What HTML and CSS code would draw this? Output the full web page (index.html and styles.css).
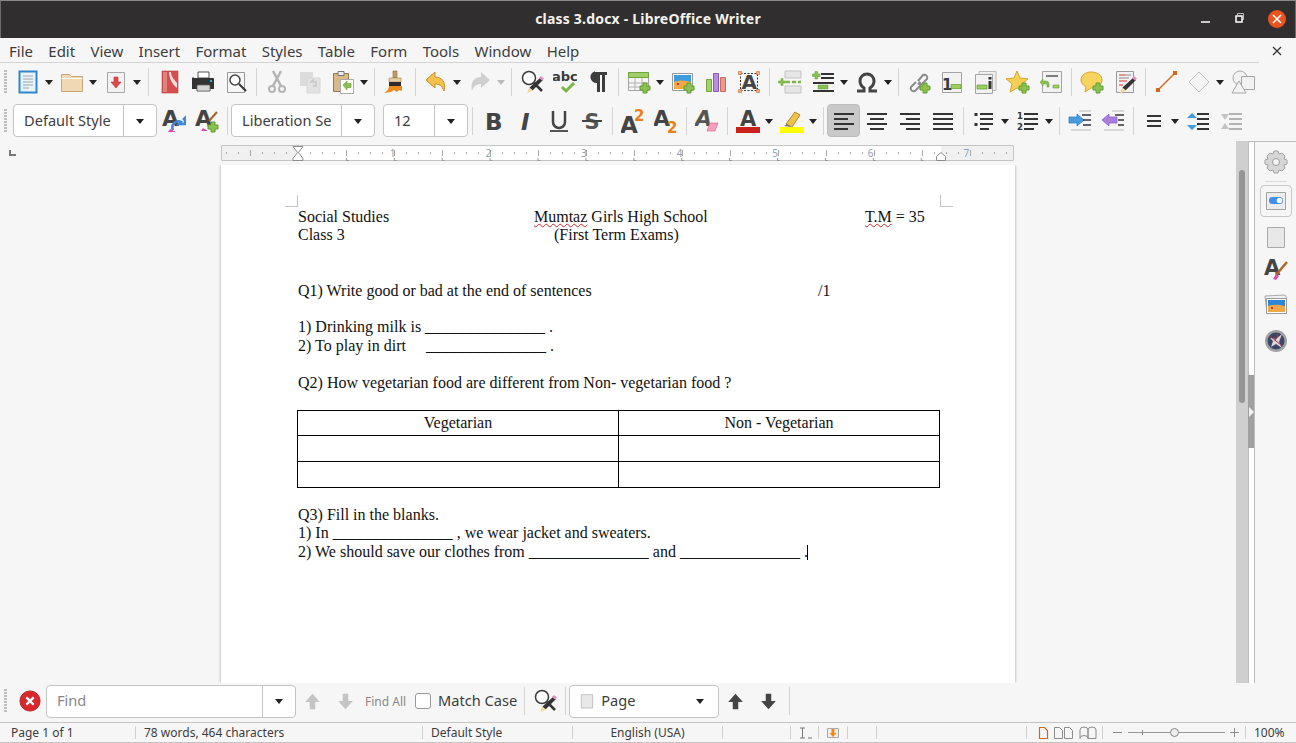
FILE: index.html
```html
<!DOCTYPE html>
<html lang="en">
<head>
    <meta charset="UTF-8">
    <title>class 3.docx - LibreOffice Writer</title>
    <link rel="stylesheet" href="styles.css">
</head>
<body>
<svg class="defs" width="0" height="0">
    <defs>
        <path id="plus" d="M16 13h4v3h3v4h-3v3h-4v-3h-3v-4h3z" fill="#8cc152" stroke="#5f9e2f"/>
        <g id="lens"><circle cx="9" cy="8" r="6.500" fill="#fff" stroke="#3a3a3a" stroke-width="1.500"/><path d="M14 13l8 8" stroke="#333" stroke-width="2.500"/></g>
        <g id="pencil"><path d="M8 22l2-5 10-9 3 2-10 10z" fill="#333"/><path d="M7 23.500l2.500-6 3.500 3z" fill="#f3dc9b"/><path d="M19 8l2-2 3 2.500-2 2z" fill="#e68fc0"/></g>

        <symbol id="i-new" viewBox="0 0 24 24"><path d="M3.500 1.500h17v21h-17z" fill="#eaf3fb" stroke="#2f86c9" stroke-width="2"/><path d="M7 6h10M7 9h10M7 12h10M7 15h10M7 18h6" stroke="#9aa4ad"/></symbol>
        <symbol id="i-open" viewBox="0 0 24 24"><path d="M1.500 4.500h8l2 2h11v15h-21z" fill="#f0d9b2" stroke="#c7a77a"/><path d="M1.500 8.500h21" stroke="#fff"/></symbol>
        <symbol id="i-save" viewBox="0 0 24 24"><path d="M3.500 2.500h17v20h-17z" fill="#f2f2f2" stroke="#a8a8a8"/><path d="M10 7h4v5h3l-5 6-5-6h3z" fill="#e0484a" stroke="#b53335" stroke-width=".6"/></symbol>
        <symbol id="i-pdf" viewBox="0 0 24 24"><path d="M4 1h16v22h-16z" fill="#d3504f" stroke="#b8403f" stroke-width=".6"/><path d="M5 2h4v20h-4z" fill="#e0807f"/><path d="M11 2h8v16c-5-4-8-10-8-16z" fill="#f6dddc"/><path d="M13 2h6v11c-3-3-6-7-6-11z" fill="#d3504f"/></symbol>
        <symbol id="i-print" viewBox="0 0 24 24"><path d="M7 2h11v6h-11z" fill="#fff" stroke="#555"/><path d="M3 8h19a1 1 0 0 1 1 1v10h-22v-10a1 1 0 0 1 2-1z" fill="#333"/><path d="M6 15h13v6h-13z" fill="#fff" stroke="#555"/><path d="M7 17h11M7 19h11" stroke="#aaa"/><path d="M19 10h2v2h-2z" fill="#29b6e8"/></symbol>
        <symbol id="i-preview" viewBox="0 0 24 24"><path d="M3.500 2.500h17v20h-17z" fill="#f6f6f6" stroke="#999"/><circle cx="11" cy="10" r="5" fill="#fff" stroke="#444" stroke-width="1.500"/><path d="M15 14l7 7" stroke="#333" stroke-width="2"/></symbol>
        <symbol id="i-cut" viewBox="0 0 24 24"><g fill="none" stroke="#b4b4b4" stroke-width="2"><circle cx="7" cy="19" r="3"/><circle cx="17" cy="19" r="3"/><path d="M8 16l8-15M16 16l-8-15" stroke-width="2.500"/></g></symbol>
        <symbol id="i-copy" viewBox="0 0 24 24"><path d="M2 2h13v14h-13z" fill="#dcdcdc"/><path d="M9 8h13v15h-13z" fill="#e2e2e2" stroke="#d6d6d6"/><path d="M12 13l3-3v2h3v4h-3" fill="none" stroke="#c8c8c8" stroke-width="1.500"/></symbol>
        <symbol id="i-paste" viewBox="0 0 24 24"><path d="M2.500 3.500h15v18h-15z" fill="#d8b98b" stroke="#94784f"/><path d="M7 1.500h6v4h-6z" fill="#eee" stroke="#777"/><path d="M9.500 9.500h13v14h-13z" fill="#fff" stroke="#aaa"/><path d="M12 15l4-4v2.500h4v4h-4v2.500z" fill="#8cc152" stroke="#5f9e2f" stroke-width=".6"/></symbol>
        <symbol id="i-brush" viewBox="0 0 24 24"><path d="M10 1h4v7h-4z" fill="#c59a63" stroke="#8a6a3c" stroke-width=".6"/><path d="M6 8h12v4h-12z" fill="#e6cfa5" stroke="#a5854f" stroke-width=".6"/><path d="M6 12h12v4h-12z" fill="#2d2d2d"/><path d="M6 16h13v5l-3-1-2 2-3-2-3 2-7 1c3-2 5-4 5-7z" fill="#ee8a1c"/></symbol>
        <symbol id="i-undo" viewBox="0 0 24 24"><path d="M2 10l9-8v5c7 0 11 5 9 14-2-5-4-7-9-7v4z" fill="#f2c04d" stroke="#c89222"/></symbol>
        <symbol id="i-redo" viewBox="0 0 24 24"><path d="M22 10l-9-8v5c-7 0-11 5-9 14 2-5 4-7 9-7v4z" fill="#cfcfcf"/></symbol>
        <symbol id="i-find" viewBox="0 0 24 24"><use href="#lens"/><use href="#pencil"/></symbol>
        <symbol id="i-abc" viewBox="0 0 24 24"><text class="ig" x="-1" y="11" font-size="13" fill="#3a3a3a">abc</text><path d="M9 17l4 4 8-8" fill="none" stroke="#7ab648" stroke-width="3"/></symbol>
        <symbol id="i-pil" viewBox="0 0 24 24"><path d="M9 2h12v3h-2v17h-3v-17h-2v17h-3v-9a6 6 0 0 1-2-11.800z" fill="#3d3d3d"/></symbol>
        <symbol id="i-table" viewBox="0 0 24 24"><path d="M1.500 2.500h20v18h-20z" fill="#f5f5f5" stroke="#a4a4a4"/><path d="M1.500 2.500h20v5h-20z" fill="#9fcf6a" stroke="#6fa53a"/><path d="M8 8v12M15 8v12M2 13h19M2 17h19" stroke="#b0b0b0"/><use href="#plus"/></symbol>
        <symbol id="i-image" viewBox="0 0 24 24"><path d="M1.500 3.500h20v17h-20z" fill="#fff" stroke="#999"/><path d="M3 5h17v8h-17z" fill="#3d9be0"/><path d="M3 12c5-2 11-2 17 0v7h-17z" fill="#f0a94a"/><path d="M6 13h2v2h-2z" fill="#d9342b"/><use href="#plus"/></symbol>
        <symbol id="i-chart" viewBox="0 0 24 24"><path d="M2.500 9.500h5v12h-5z" fill="#a5d16b" stroke="#75a53a"/><path d="M9.500 3.500h5v18h-5z" fill="#b88ce0" stroke="#8a5cb5"/><path d="M16.500 7.500h5v14h-5z" fill="#ee9b8a" stroke="#c96b58"/></symbol>
        <symbol id="i-textbox" viewBox="0 0 24 24"><path d="M3.500 3.500h17v17h-17z" fill="none" stroke="#333" stroke-dasharray="2 1.500"/><g fill="#f5b183" stroke="#d9733a" stroke-width=".7"><path d="M1.500 1.500h3v3h-3zM19.500 1.500h3v3h-3zM1.500 19.500h3v3h-3zM19.500 19.500h3v3h-3z"/></g><text class="ig" x="4.500" y="19" font-size="20" fill="#444">A</text></symbol>
        <symbol id="i-break" viewBox="0 0 24 24"><path d="M7 1h16v7h-16zM7 16h16v7h-16z" fill="#e6e6e6" stroke="#c4c4c4"/><path d="M8 12h15" stroke="#7ab648" stroke-width="2.500" stroke-dasharray="4 2"/><path d="M3 8.500h2v2.500h2.500v2h-2.500v2.500h-2v-2.500h-2.500v-2h2.500z" fill="#8cc152" stroke="#5f9e2f" stroke-width=".5"/></symbol>
        <symbol id="i-field" viewBox="0 0 24 24"><path d="M4 1.500h2.500v2.500h2.500v2.500h-2.500v2.500h-2.500v-2.500h-2.500v-2.500h2.500z" fill="#8cc152" stroke="#5f9e2f" stroke-width=".5"/><path d="M10 4h13M10 8h13M2 13h21M2 21h21" stroke="#333" stroke-width="2"/><path d="M7 15h10v4h-10z" fill="#8cc152" stroke="#5f9e2f" stroke-width=".5"/></symbol>
        <symbol id="i-omega" viewBox="0 0 24 24"><path d="M2 21h7v-3c-3-2-4-4-4-7 0-4 3-7 7-7s7 3 7 7c0 3-1 5-4 7v3h7" fill="none" stroke="#444" stroke-width="3"/></symbol>
        <symbol id="i-link" viewBox="0 0 24 24"><g fill="none" stroke="#8a8a8a" stroke-width="2"><path d="M9 12l-5 5a3 3 0 0 0 4 4l5-5a3 3 0 0 0-1-4"/><path d="M11 11l5-6a3 3 0 0 1 4 4l-5 5a3 3 0 0 1-4-1"/></g><use href="#plus"/></symbol>
        <symbol id="i-foot" viewBox="0 0 24 24"><path d="M2.500 2.500h19v20h-19z" fill="#f2f2f2" stroke="#a4a4a4"/><text class="ig" x="2" y="20" font-size="15" fill="#3a3a3a">1</text><path d="M11 14.500h10v4h-10z" fill="#9bd05f" stroke="#5f9e2f" stroke-width=".7"/></symbol>
        <symbol id="i-end" viewBox="0 0 24 24"><path d="M6 1.500h17v19h-17z" fill="#eee" stroke="#bbb"/><path d="M2.500 4.500h17v19h-17z" fill="#f2f2f2" stroke="#a4a4a4"/><path d="M4 15h10v4h-10z" fill="#9bd05f" stroke="#5f9e2f" stroke-width=".7"/><path d="M15.500 11h3v8h-3zM15.500 7h3v2.500h-3z" fill="#333"/></symbol>
        <symbol id="i-star" viewBox="0 0 24 24"><path d="M11 1l3 7 8 .8-6 5.200 2 8-7-4-7 4 2-8-6-5.200 8-.8z" fill="#f6cf55" stroke="#d9a531"/><use href="#plus"/></symbol>
        <symbol id="i-xref" viewBox="0 0 24 24"><path d="M3.500 1.500h19v21h-19z" fill="#f2f2f2" stroke="#a4a4a4"/><path d="M7 6h12" stroke="#555" stroke-width="1.500"/><path d="M14 15h6v3h-6z" fill="#9bd05f" stroke="#5f9e2f" stroke-width=".6"/><path d="M1 12l3-3v2h3a3 3 0 0 1 3 3v3l-2 0v-3h-4v2z" fill="#8cc152" stroke="#5f9e2f" stroke-width=".5"/></symbol>
        <symbol id="i-comment" viewBox="0 0 24 24"><path d="M11 2c6 0 11 3 11 8s-5 8-11 8l-6 4 1-5c-3-2-5-4-5-7 0-5 5-8 10-8z" fill="#f7d360" stroke="#d7a62c"/><use href="#plus"/></symbol>
        <symbol id="i-track" viewBox="0 0 24 24"><path d="M3.500 1.500h17v21h-17z" fill="#f2f2f2" stroke="#999"/><path d="M6 5h6M6 11h8M6 15h4" stroke="#d9342b"/><path d="M6 8h10M12 5h6" stroke="#888"/><use href="#pencil"/></symbol>
        <symbol id="i-line" viewBox="0 0 24 24"><path d="M4 20l17-17" stroke="#d4651d" stroke-width="1.500"/><path d="M2 18h4v4h-4zM19 1h4v4h-4z" fill="#d4651d"/></symbol>
        <symbol id="i-diamond" viewBox="0 0 24 24"><path d="M12 2l10 10-10 10-10-10z" fill="#f4f4f4" stroke="#c0c0c0"/></symbol>
        <symbol id="i-shapes" viewBox="0 0 24 24"><circle cx="9" cy="8" r="7" fill="#f2f2f2" stroke="#a6a6a6"/><path d="M10.500 6.500h13v13h-13z" fill="#f2f2f2" stroke="#a6a6a6"/><path d="M8 11l7 12h-14z" fill="#f2f2f2" stroke="#a6a6a6"/></symbol>

        <symbol id="i-upd" viewBox="0 0 24 24"><text class="ig" x="0" y="17" font-size="22" fill="#444">A</text><path d="M11 21a6 6 0 0 1 8-8l-2 2h6v-6l-2 2" fill="none" stroke="#3d87d8" stroke-width="2.500"/><path d="M8 20l6 3h-8z" fill="#d44fb0"/></symbol>
        <symbol id="i-newst" viewBox="0 0 24 24"><text class="ig" x="0" y="17" font-size="22" fill="#444">A</text><path d="M14 12l8-9" stroke="#a9622a" stroke-width="2"/><path d="M8 19l5 3h-7z" fill="#d44fb0"/><use href="#plus"/></symbol>
        <symbol id="i-b" viewBox="0 0 24 24"><text class="ig" x="4" y="21" font-size="23" fill="#444">B</text></symbol>
        <symbol id="i-i" viewBox="0 0 24 24"><text class="ig ig-it" x="7" y="21" font-size="23" fill="#444">I</text></symbol>
        <symbol id="i-u" viewBox="0 0 24 24"><path d="M6 2v11a6 6 0 0 0 12 0v-11" fill="none" stroke="#444" stroke-width="2.500"/><path d="M3 22h18" stroke="#555" stroke-width="2"/></symbol>
        <symbol id="i-s" viewBox="0 0 24 24"><text class="ig" x="4.500" y="20" font-size="21" fill="#555">S</text><path d="M2 12h20" stroke="#444" stroke-width="2"/></symbol>
        <symbol id="i-sup" viewBox="0 0 24 24"><text class="ig" x="-1" y="24" font-size="23" fill="#444">A</text><text class="ig" x="13" y="12" font-size="15" fill="#e8801a">2</text></symbol>
        <symbol id="i-sub" viewBox="0 0 24 24"><text class="ig" x="-1" y="17" font-size="22" fill="#444">A</text><text class="ig" x="13" y="24" font-size="15" fill="#e8801a">2</text></symbol>
        <symbol id="i-clear" viewBox="0 0 24 24"><text class="ig ig-it" x="0" y="17" font-size="22" fill="#555">A</text><path d="M12 22l3-8h8l-3 8z" fill="#f2a0bd" stroke="#d76a93" stroke-width=".7"/></symbol>
        <symbol id="i-color" viewBox="0 0 24 24"><text class="ig" x="4" y="17" font-size="21" fill="#444">A</text><path d="M0 18h24v6h-24z" fill="#c9211e"/></symbol>
        <symbol id="i-mark" viewBox="0 0 24 24"><path d="M6 15l9-12 5 3-8 12z" fill="#eec24a" stroke="#b48a22"/><path d="M4 17l3-2 4 3z" fill="#777"/><path d="M0 18h24v6h-24z" fill="#ff0"/></symbol>
        <symbol id="i-left" viewBox="0 0 24 24"><path d="M2 5h20M2 10h14M2 15h20M2 20h14" stroke="#333" stroke-width="2"/></symbol>
        <symbol id="i-center" viewBox="0 0 24 24"><path d="M2 5h20M5 10h14M2 15h20M5 20h14" stroke="#333" stroke-width="2"/></symbol>
        <symbol id="i-right" viewBox="0 0 24 24"><path d="M2 5h20M8 10h14M2 15h20M8 20h14" stroke="#333" stroke-width="2"/></symbol>
        <symbol id="i-just" viewBox="0 0 24 24"><path d="M2 5h20M2 10h20M2 15h20M2 20h20" stroke="#333" stroke-width="2"/></symbol>
        <symbol id="i-bul" viewBox="0 0 24 24"><path d="M2.500 4h3v3h-3zM2.500 14h3v3h-3z" fill="#333"/><path d="M8 5h13M8 10h13M8 15h13M8 20h9" stroke="#333" stroke-width="1.800"/></symbol>
        <symbol id="i-num" viewBox="0 0 24 24"><text class="ig" x="1" y="10" font-size="8.500" fill="#333">1</text><text class="ig" x="1" y="21" font-size="8.500" fill="#333">2</text><path d="M8 5h14M8 10h14M8 15h14M8 20h10" stroke="#333" stroke-width="1.800"/></symbol>
        <symbol id="i-ind" viewBox="0 0 24 24"><path d="M1 8h8v-3l7 6-7 6v-3h-8z" fill="#4a9be2" stroke="#2f78bd" stroke-width=".7"/><path d="M14 6h9M15 11h8M15 16h8" stroke="#333" stroke-width="1.500"/><path d="M11 2h12M3 21h20" stroke="#bbb"/></symbol>
        <symbol id="i-out" viewBox="0 0 24 24"><path d="M16 8h-8v-3l-7 6 7 6v-3h8z" fill="#a97fe0" stroke="#8558bb" stroke-width=".7"/><path d="M14 6h9M17 11h6M17 16h6" stroke="#333" stroke-width="1.500"/><path d="M11 2h12M3 21h20" stroke="#bbb"/></symbol>
        <symbol id="i-lines" viewBox="0 0 24 24"><path d="M5 7h14M5 12h14M5 17h14" stroke="#333" stroke-width="2"/></symbol>
        <symbol id="i-para" viewBox="0 0 24 24"><path d="M6 4l5 5h-10zM6 21l-5-5h10z" fill="#3d9be0"/><path d="M11 5h12M11 10h12M11 15h12M11 20h12" stroke="#333" stroke-width="2"/></symbol>
        <symbol id="i-dec" viewBox="0 0 24 24"><path d="M2 5h8l-4 6zM2 20h8l-4-6z" fill="#c4c4c4"/><path d="M10 5h13M10 10h13M10 15h13M10 20h13" stroke="#b4b4b4" stroke-width="2"/></symbol>

        <symbol id="i-gear" viewBox="0 0 24 24"><path d="M10 1h4l1 3 3-1 3 3-1 3 3 1v4l-3 1 1 3-3 3-3-1-1 3h-4l-1-3-3 1-3-3 1-3-3-1v-4l3-1-1-3 3-3 3 1z" fill="#d6d6d6" stroke="#a4a4a4"/><circle cx="12" cy="12" r="3.500" fill="#f6f6f6" stroke="#999"/></symbol>
        <symbol id="i-props" viewBox="0 0 24 24"><path d="M2.500 3.500h19v17h-19z" fill="#ececec" stroke="#a4a4a4"/><rect x="5" y="8" width="14" height="7" rx="3.500" fill="#3f8ef0"/><circle cx="15.500" cy="11.500" r="2.800" fill="#fff"/></symbol>
        <symbol id="i-page" viewBox="0 0 24 24"><path d="M3.500 2.500h17v20h-17z" fill="#e8e8e8" stroke="#aaa"/></symbol>
        <symbol id="i-styles" viewBox="0 0 24 24"><text class="ig" x="0" y="18" font-size="21" fill="#444">A</text><path d="M12 18l11-13" stroke="#b06a28" stroke-width="2.500"/><path d="M9 22l3-5 3 2-3 4z" fill="#d44fb0"/></symbol>
        <symbol id="i-gallery" viewBox="0 0 24 24"><path d="M1 3l20-1 2 3-20 15z" fill="#f0f0f0" stroke="#aaa"/><path d="M2.500 5.500h20v15h-20z" fill="#fff" stroke="#999"/><path d="M4 7h17v6h-17z" fill="#2f86d6"/><path d="M4 13c6-2 11-1 17 0v6h-17z" fill="#f0a94a"/><path d="M7 14h2v2h-2z" fill="#d9342b"/></symbol>
        <symbol id="i-nav" viewBox="0 0 24 24"><circle cx="12" cy="12" r="11" fill="#a2a2a2"/><circle cx="12" cy="12" r="8.500" fill="#3c4766"/><path d="M6 9l6 1 6-5-3 8 3 6-6-4-5 3 2-6z" fill="#d8d8d8"/><path d="M6 7l12 10M14 5l-3 7" stroke="#b8304a"/></symbol>

        <symbol id="i-close" viewBox="0 0 24 24"><circle cx="12" cy="12" r="11" fill="#d9272e" stroke="#b81f25"/><path d="M8 8l8 8M16 8l-8 8" stroke="#fff" stroke-width="2.500"/></symbol>
        <symbol id="i-up" viewBox="0 0 24 24"><path d="M12 4l8 9h-5v8h-6v-8h-5z"/></symbol>
        <symbol id="i-down" viewBox="0 0 24 24"><path d="M12 21l8-9h-5v-8h-6v8h-5z"/></symbol>
    </defs>
</svg>

<div class="window">
    <div class="titlebar">
        <span class="title">class 3.docx - LibreOffice Writer</span>
        <div class="winbtns">
            <svg width="12" height="12" viewBox="0 0 12 12"><path d="M1 9h9" stroke="#fff" stroke-width="1.500"/></svg>
            <svg width="12" height="12" viewBox="0 0 12 12"><path d="M3.500 2v-1.500h6v6h-1.500" fill="none" stroke="#bbb"/><path d="M2 3h6v6h-6z" fill="none" stroke="#fff" stroke-width="1.500"/></svg>
            <span class="winclose"><svg width="10" height="10" viewBox="0 0 10 10"><path d="M1 1l8 8M9 1l-8 8" stroke="#fff" stroke-width="1.600"/></svg></span>
        </div>
    </div>

    <div class="menubar">
        <div class="menus">
            <span>File</span><span>Edit</span><span>View</span><span>Insert</span><span>Format</span><span>Styles</span><span>Table</span><span>Form</span><span>Tools</span><span>Window</span><span>Help</span>
        </div>
        <svg class="docclose" width="10" height="10" viewBox="0 0 10 10"><path d="M1 1l8 8M9 1l-8 8" stroke="#333" stroke-width="1.300"/></svg>
    </div>

    <div class="toolbar tb-one">
        <i class="grip"></i>
        <span class="tb"><svg><use href="#i-new"/></svg></span><b class="dd"></b>
        <span class="tb"><svg><use href="#i-open"/></svg></span><b class="dd"></b>
        <span class="tb"><svg><use href="#i-save"/></svg></span><b class="dd"></b>
        <i class="sep sep-w"></i>
        <span class="tb"><svg><use href="#i-pdf"/></svg></span>
        <span class="tb"><svg><use href="#i-print"/></svg></span>
        <span class="tb"><svg><use href="#i-preview"/></svg></span>
        <i class="sep"></i>
        <span class="tb"><svg><use href="#i-cut"/></svg></span>
        <span class="tb"><svg><use href="#i-copy"/></svg></span>
        <span class="tb"><svg><use href="#i-paste"/></svg></span><b class="dd"></b>
        <i class="sep"></i>
        <span class="tb"><svg><use href="#i-brush"/></svg></span>
        <i class="sep"></i>
        <span class="tb"><svg><use href="#i-undo"/></svg></span><b class="dd"></b>
        <span class="tb"><svg><use href="#i-redo"/></svg></span><b class="dd off"></b>
        <i class="sep"></i>
        <span class="tb"><svg><use href="#i-find"/></svg></span>
        <span class="tb"><svg><use href="#i-abc"/></svg></span>
        <span class="tb"><svg><use href="#i-pil"/></svg></span>
        <i class="sep"></i>
        <span class="tb"><svg><use href="#i-table"/></svg></span><b class="dd"></b>
        <span class="tb"><svg><use href="#i-image"/></svg></span>
        <span class="tb"><svg><use href="#i-chart"/></svg></span>
        <span class="tb"><svg><use href="#i-textbox"/></svg></span>
        <i class="sep"></i>
        <span class="tb"><svg><use href="#i-break"/></svg></span>
        <span class="tb"><svg><use href="#i-field"/></svg></span><b class="dd"></b>
        <span class="tb"><svg><use href="#i-omega"/></svg></span><b class="dd"></b>
        <i class="sep"></i>
        <span class="tb"><svg><use href="#i-link"/></svg></span>
        <span class="tb"><svg><use href="#i-foot"/></svg></span>
        <span class="tb"><svg><use href="#i-end"/></svg></span>
        <span class="tb"><svg><use href="#i-star"/></svg></span>
        <span class="tb"><svg><use href="#i-xref"/></svg></span>
        <i class="sep"></i>
        <span class="tb"><svg><use href="#i-comment"/></svg></span>
        <span class="tb"><svg><use href="#i-track"/></svg></span>
        <i class="sep"></i>
        <span class="tb"><svg><use href="#i-line"/></svg></span>
        <span class="tb"><svg><use href="#i-diamond"/></svg></span><b class="dd"></b>
        <span class="tb"><svg><use href="#i-shapes"/></svg></span>
    </div>

    <div class="toolbar tb-two">
        <i class="grip"></i>
        <div class="combo combo-style"><span class="combo-val">Default Style</span><span class="combo-btn"><b class="dd"></b></span></div>
        <span class="tb"><svg><use href="#i-upd"/></svg></span>
        <span class="tb"><svg><use href="#i-newst"/></svg></span>
        <i class="sep"></i>
        <div class="combo combo-font"><span class="combo-val">Liberation Se</span><span class="combo-btn"><b class="dd"></b></span></div>
        <div class="combo combo-size"><span class="combo-val">12</span><span class="combo-btn"><b class="dd"></b></span></div>
        <i class="sep"></i>
        <span class="tb"><svg><use href="#i-b"/></svg></span>
        <span class="tb"><svg><use href="#i-i"/></svg></span>
        <span class="tb"><svg><use href="#i-u"/></svg></span>
        <span class="tb"><svg><use href="#i-s"/></svg></span>
        <i class="sep"></i>
        <span class="tb"><svg><use href="#i-sup"/></svg></span>
        <span class="tb"><svg><use href="#i-sub"/></svg></span>
        <i class="sep"></i>
        <span class="tb"><svg><use href="#i-clear"/></svg></span>
        <i class="sep"></i>
        <span class="tb"><svg><use href="#i-color"/></svg></span><b class="dd"></b>
        <span class="tb"><svg><use href="#i-mark"/></svg></span><b class="dd"></b>
        <i class="sep"></i>
        <span class="tb active"><svg><use href="#i-left"/></svg></span>
        <span class="tb"><svg><use href="#i-center"/></svg></span>
        <span class="tb"><svg><use href="#i-right"/></svg></span>
        <span class="tb"><svg><use href="#i-just"/></svg></span>
        <i class="sep"></i>
        <span class="tb"><svg><use href="#i-bul"/></svg></span><b class="dd"></b>
        <span class="tb"><svg><use href="#i-num"/></svg></span><b class="dd"></b>
        <i class="sep"></i>
        <span class="tb"><svg><use href="#i-ind"/></svg></span>
        <span class="tb"><svg><use href="#i-out"/></svg></span>
        <i class="sep"></i>
        <span class="tb"><svg><use href="#i-lines"/></svg></span><b class="dd"></b>
        <span class="tb"><svg><use href="#i-para"/></svg></span>
        <span class="tb"><svg><use href="#i-dec"/></svg></span>
    </div>

    <div class="main">
        <div class="workspace">
            <div class="rulerrow">
                <i class="corner"></i>
                <div class="ruler">
                    <svg width="793" height="15">
                        <defs>
                            <pattern id="t8" width="12" height="15" patternUnits="userSpaceOnUse" x="4"><path d="M.5 6v2" stroke="#a8a8a8"/></pattern>
                            <pattern id="t2" width="48" height="15" patternUnits="userSpaceOnUse" x="28"><path d="M.5 4v6" stroke="#a8a8a8"/></pattern>
                            <pattern id="tab" width="47.900" height="15" patternUnits="userSpaceOnUse" x="76"><path d="M.5 12v3M-2 14.500h5" stroke="#999"/></pattern>
                        </defs>
                        <rect width="793" height="15" fill="url(#t8)"/>
                        <rect width="793" height="15" fill="url(#t2)"/>
                        <rect x="100" width="615" height="15" fill="url(#tab)"/>
                        <path d="M71 .5h10l-4.500 6 4.500 6v2h-10v-2l4.500-6-4.500-6z" fill="#fff" stroke="#8c8c8c"/>
                        <path d="M714.500 14.500v-4l4.500-4 4.500 4v4z" fill="#fff" stroke="#8c8c8c"/>
                    </svg>
                    <div class="ruler-nums"><span>1</span><span>2</span><span>3</span><span>4</span><span>5</span><span>6</span><span>7</span></div>
                </div>
            </div>
            <div class="page">
                <i class="mark mark-l"></i>
                <i class="mark mark-r"></i>
                <div class="headrow"><span>Social Studies</span><span><span class="spell">Mumtaz</span> Girls High School</span><span><span class="spell">T.M</span> = 35</span></div>
                <div class="headrow"><span>Class 3</span><span class="exam">(First Term Exams)</span></div>
                <p class="blank"></p>
                <p class="blank"></p>
                <div class="q1row"><span>Q1) Write good or bad at the end of sentences</span><span>/1</span></div>
                <p class="blank"></p>
                <p>1) Drinking milk is _______________ .</p>
                <p>2) To play in dirt <span class="tabgap"></span>_______________ .</p>
                <p class="blank"></p>
                <p>Q2) How vegetarian food are different from Non- vegetarian food ?</p>
                <table class="grid">
                    <tr class="r1"><td>Vegetarian</td><td>Non - Vegetarian</td></tr>
                    <tr class="r2"><td></td><td></td></tr>
                    <tr class="r2"><td></td><td></td></tr>
                </table>
                <p>Q3) Fill in the blanks.</p>
                <p>1) In _______________ , we wear jacket and sweaters.</p>
                <p>2) We should save our clothes from _______________ and _______________ .<i class="caret"></i></p>
            </div>
        </div>
        <div class="vscroll"><i class="thumb"></i></div>
        <div class="sidegrip"><i class="tri"></i></div>
        <div class="sidebar">
            <svg class="sb-gear"><use href="#i-gear"/></svg>
            <i class="sb-line"></i>
            <span class="sb-active"><svg><use href="#i-props"/></svg></span>
            <svg class="sb-i"><use href="#i-page"/></svg>
            <svg class="sb-i"><use href="#i-styles"/></svg>
            <svg class="sb-i sb-gal"><use href="#i-gallery"/></svg>
            <svg class="sb-i sb-gal"><use href="#i-nav"/></svg>
        </div>
    </div>

    <div class="findbar">
        <i class="grip"></i>
        <svg class="find-x"><use href="#i-close"/></svg>
        <div class="combo combo-find"><span class="combo-val placeholder">Find</span><span class="combo-btn"><b class="dd"></b></span></div>
        <svg class="arrow arrow-off"><use href="#i-up"/></svg>
        <svg class="arrow arrow-off"><use href="#i-down"/></svg>
        <span class="findall">Find All</span>
        <i class="check"></i>
        <span class="matchcase">Match Case</span>
        <i class="sep"></i>
        <span class="tb"><svg><use href="#i-find"/></svg></span>
        <i class="sep"></i>
        <div class="combo combo-page"><svg class="pg"><use href="#i-page"/></svg><span class="combo-val">Page</span><b class="dd"></b></div>
        <svg class="arrow"><use href="#i-up"/></svg>
        <svg class="arrow"><use href="#i-down"/></svg>
        <i class="sep"></i>
    </div>

    <div class="statusbar">
        <span class="st st-page">Page 1 of 1</span>
        <span class="st st-words">78 words, 464 characters</span>
        <span class="st st-style">Default Style</span>
        <span class="st st-lang">English (USA)</span>
        <span class="st st-blank"></span>
        <span class="st st-ins"><svg width="16" height="14" viewBox="0 0 16 14"><path d="M3 2h5M3 12h5M5.500 2v10M11 12h4" stroke="#777" fill="none"/></svg></span>
        <span class="st st-sig"><svg width="12" height="12" viewBox="0 0 12 12"><path d="M.5 1.500h11v9h-11z" fill="#eee" stroke="#aaa"/><path d="M4.500 2h3v4h2l-3.500 4-3.500-4h2z" fill="#ee8a1c"/></svg></span>
        <span class="st st-a"></span>
        <span class="st st-b"></span>
        <span class="st st-views">
            <svg width="60" height="14" viewBox="0 0 60 14"><path d="M1.500 1.500h5l3 3v8h-8z" fill="none" stroke="#d4651d" stroke-width="1.200"/><path d="M16.500 1.500h5l3 3v8h-8zM26.500 1.500h5l3 3v8h-8z" fill="none" stroke="#8c8c8c"/><path d="M42 4a4 3 0 0 1 8 0v8.500a4 3 0 0 0-8 0zM50 4a4 3 0 0 1 8 0v8.500h-8z" fill="none" stroke="#8c8c8c"/></svg>
        </span>
        <span class="st st-zoom">
            <i class="zm zm-minus"></i>
            <span class="slider"><i class="slider-tick"></i><i class="slider-knob"></i></span>
            <i class="zm zm-plus"></i>
        </span>
        <span class="st st-pct">100%</span>
    </div>
</div>
</body>
</html>
```

FILE: styles.css
```css
* {
    box-sizing: border-box;
}

body {
    margin: 0;
    overflow: hidden;
    background-color: #f6f6f6;
    font-family: "Noto Sans", sans-serif;
    color: #3d3d3d;
}

.defs {
    position: absolute;
}

.ig {
    font-family: "DejaVu Sans", sans-serif;
    font-weight: bold;
}

.ig-it {
    font-style: italic;
}

.window {
    display: flex;
    flex-direction: column;
    width: 1296px;
    height: 743px;
}

/* title bar */
.titlebar {
    flex: 0 0 38px;
    display: flex;
    align-items: center;
    justify-content: center;
    position: relative;
    padding-bottom: 2px;
    background-color: #302e2e;
    border-top: 1px solid #8c8a88;
    border-left: 1px solid #6e6c6c;
    border-right: 1px solid #6e6c6c;
}

.title {
    color: #f4f2ee;
    font-size: 14px;
    font-weight: bold;
    letter-spacing: 0.2px;
}

.winbtns {
    position: absolute;
    right: 9px;
    top: 9px;
    display: flex;
    align-items: center;
    gap: 22px;
}

.winclose {
    display: flex;
    align-items: center;
    justify-content: center;
    width: 18px;
    height: 18px;
    border-radius: 50%;
    background-color: #e95420;
}

/* menu */
.menubar {
    flex: 0 0 25px;
    display: flex;
    align-items: center;
    justify-content: space-between;
    padding: 0 14px 0 9px;
    font-size: 15px;
    position: relative;
}

.menubar::after {
    content: "";
    position: absolute;
    left: 0;
    bottom: 0;
    width: 1259px;
    border-bottom: 1px solid #d4d4d4;
}

.menus {
    display: flex;
    gap: 15.3px;
}

/* toolbars */
.toolbar {
    display: flex;
    align-items: center;
}

.tb-one {
    flex: 0 0 37px;
}

.tb-two {
    flex: 0 0 41px;
}

.grip {
    flex: 0 0 3px;
    width: 3px;
    height: 24px;
    margin: 0 4px 0 4px;
    background-image: repeating-linear-gradient(#bdbdbd 0 2px, transparent 2px 3px);
}

.tb {
    flex: 0 0 33px;
    height: 33px;
    display: flex;
    align-items: center;
    justify-content: center;
    border-radius: 4px;
}

.tb svg {
    width: 24px;
    height: 24px;
}

.tb.active {
    background-color: #c9c9c9;
    border: 1px solid #bcbcbc;
}

.dd {
    flex: 0 0 11px;
    width: 11px;
    height: 5px;
    display: block;
    position: relative;
    margin-top: 1px;
}

.dd::after {
    content: "";
    position: absolute;
    left: 1px;
    top: 0;
    border-left: 4.5px solid transparent;
    border-right: 4.5px solid transparent;
    border-top: 5px solid #222;
}

.dd.off::after {
    border-top-color: #bbb;
}

.sep {
    flex: 0 0 8px;
    height: 28px;
    display: block;
    background: linear-gradient(#d4d4d4, #d4d4d4) center / 1px 100% no-repeat;
}

.sep-w {
    flex-basis: 10px;
}

.combo {
    display: flex;
    align-items: center;
    height: 33px;
    background-color: #fff;
    border: 1px solid #c4c4c4;
    border-radius: 4px;
    font-size: 14.6px;
}

.combo-val {
    flex: 1;
    padding: 0 0 2px 10px;
    white-space: nowrap;
    overflow: hidden;
}

.combo-btn {
    height: 100%;
    display: flex;
    align-items: center;
    justify-content: center;
    border-left: 1px solid #c4c4c4;
}

.combo-style {
    width: 144px;
    margin-left: 2px;
}

.combo-style .combo-btn,
.combo-font .combo-btn {
    width: 33px;
}

.combo-font {
    width: 144px;
}

.combo-size {
    width: 85px;
    margin-left: 8px;
}

.combo-size .combo-btn {
    width: 33px;
}

/* ruler and page */
.main {
    flex: 0 0 542px;
    display: flex;
    min-height: 0;
}

.workspace {
    flex: 0 0 1236px;
    display: flex;
    flex-direction: column;
    overflow: hidden;
}

.rulerrow {
    flex: 0 0 24px;
    display: flex;
    align-items: flex-start;
    padding-top: 4px;
}

.corner {
    width: 7px;
    height: 6px;
    margin: 5px 0 0 9px;
    border-left: 2px solid #777;
    border-bottom: 2px solid #777;
}

.ruler {
    position: relative;
    width: 793px;
    height: 16px;
    margin-left: 205px;
    border: 1px solid #c4c4c4;
    border-radius: 1px;
    background: linear-gradient(#fff, #fff) 76px 0 / 643px 100% no-repeat #f0f0f0;
}

.ruler svg {
    display: block;
}

.ruler-nums {
    position: absolute;
    left: 78px;
    top: 0;
    display: flex;
    font-size: 10px;
    line-height: 14px;
    color: #8fa0b3;
}

.ruler-nums span {
    flex: 0 0 95.6px;
    text-align: right;
}

.page {
    position: relative;
    flex: 1;
    width: 794px;
    margin-left: 221px;
    padding: 43px 0 0 77px;
    background-color: #fff;
    box-shadow: 0 0 3px rgba(0, 0, 0, 0.35);
    clip-path: inset(0 -5px);
    font-family: "Liberation Serif", serif;
    font-size: 16px;
    line-height: 18.4px;
    color: #111;
}

.page p {
    margin: 0;
    white-space: pre-wrap;
}

.page .blank {
    height: 18.4px;
}

.mark {
    position: absolute;
    top: 30px;
    width: 13px;
    height: 12px;
    border-bottom: 1px solid #c4c4c4;
}

.mark-l {
    left: 64px;
    border-right: 1px solid #c4c4c4;
}

.mark-r {
    left: 719px;
    border-left: 1px solid #c4c4c4;
}

.headrow {
    display: grid;
    grid-template-columns: 236px 331px auto;
}

.spell {
    text-decoration: underline wavy #d7262a 1px;
    text-underline-offset: 1px;
}

.exam {
    padding-left: 20px;
}

.q1row {
    display: grid;
    grid-template-columns: 520px auto;
}

.tabgap {
    display: inline-block;
    width: 16px;
}

.grid {
    width: 643px;
    height: 78px;
    margin: 18px 0 18px -1px;
    border-collapse: collapse;
    table-layout: fixed;
}

.grid td {
    padding: 0;
    border: 1px solid #000;
    text-align: center;
}

.r1 {
    height: 25px;
}

.r2 {
    height: 26px;
}

.caret {
    display: inline-block;
    width: 1px;
    height: 15px;
    margin-left: -1px;
    background-color: #000;
    vertical-align: -3px;
}

/* scrollbar + sidebar */
.vscroll {
    flex: 0 0 12px;
    padding: 29px 3px 0;
    background-color: #cfcfcf;
}

.thumb {
    display: block;
    width: 6px;
    height: 233px;
    border-radius: 3px;
    background-color: #959595;
}

.sidegrip {
    flex: 0 0 6px;
    position: relative;
    background-color: #fff;
    border-left: 1px solid #bdbdbd;
    border-top: 1px solid #bdbdbd;
}

.sidegrip::after {
    content: "";
    position: absolute;
    left: -1px;
    top: 233px;
    width: 6px;
    height: 73px;
    background-color: #a0a0a0;
}

.tri {
    position: absolute;
    z-index: 1;
    left: 0;
    top: 265px;
    border-left: 5px solid #f2f2f2;
    border-top: 5px solid transparent;
    border-bottom: 5px solid transparent;
}

.sidebar {
    flex: 1;
    display: flex;
    flex-direction: column;
    align-items: center;
    padding-top: 8px;
    border-left: 1px solid #bdbdbd;
    border-top: 1px solid #bdbdbd;
}

.sidebar svg {
    width: 24px;
    height: 24px;
    display: block;
}

.sb-line {
    width: 22px;
    height: 1px;
    margin: 7px 0 3px;
    background-color: #dcdcdc;
}

.sb-active {
    display: flex;
    align-items: center;
    justify-content: center;
    width: 32px;
    height: 32px;
    border: 1px solid #c8c8c8;
    border-radius: 4px;
}

.sidebar .sb-i {
    margin-top: 8px;
}

.sidebar .sb-gal {
    margin-top: 12px;
}

/* find bar */
.findbar {
    flex: 0 0 39px;
    display: flex;
    align-items: center;
    padding-bottom: 3px;
    font-size: 14.6px;
}

.find-x {
    width: 22px;
    height: 22px;
    margin: 0 5px 0 8px;
    flex: none;
}

.combo-find {
    width: 250px;
    flex: none;
}

.placeholder {
    color: #888;
}

.arrow {
    flex: 0 0 33px;
    width: 33px;
    height: 22px;
    fill: #444;
}

.arrow-off {
    fill: #c4c4c4;
}

.combo-find .combo-btn {
    width: 33px;
}

.findall {
    margin-left: 3px;
    font-size: 12px;
    color: #8a8a8a;
    white-space: nowrap;
}

.check {
    flex: 0 0 16px;
    height: 16px;
    margin: 0 7px 0 9px;
    background-color: #fff;
    border: 1px solid #999;
    border-radius: 3px;
}

.matchcase {
    white-space: nowrap;
    margin-right: 3px;
    padding-bottom: 2px;
}

.combo-page {
    flex: 0 0 150px;
    padding-right: 12px;
}

.pg {
    flex: none;
    width: 16px;
    height: 16px;
    margin-left: 9px;
}

.combo-page .combo-val {
    padding-left: 6px;
}

/* status bar */
.statusbar {
    flex: 0 0 21px;
    display: flex;
    align-items: center;
    border-top: 1px solid #c4c4c4;
    border-bottom: 1px solid #c4c4c4;
    font-size: 12px;
}

.st {
    display: flex;
    align-items: center;
    height: 13px;
    flex: none;
    white-space: nowrap;
    border-right: 1px solid #d0d0d0;
}

.st-page { width: 136px; padding-left: 11px; }
.st-words { width: 287px; padding-left: 8px; }
.st-style { width: 150px; padding-left: 8px; }
.st-lang { width: 150px; justify-content: center; }
.st-blank { width: 68px; }
.st-ins { width: 28px; justify-content: center; }
.st-sig { width: 29px; justify-content: center; }
.st-a { width: 29px; }
.st-b { width: 150px; }
.st-views { width: 76px; padding-left: 11px; }
.st-zoom { width: 143px; position: relative; }
.st-pct { border-right: 0; padding-left: 8px; }

.zm {
    position: absolute;
    top: 6px;
    width: 9px;
    height: 1px;
    background-color: #8c8c8c;
}

.zm-minus { left: 10px; }
.zm-plus { left: 127px; }

.zm-plus::after {
    content: "";
    position: absolute;
    left: 4px;
    top: -4px;
    width: 1px;
    height: 9px;
    background-color: #8c8c8c;
}

.slider {
    position: absolute;
    left: 25px;
    top: 6px;
    width: 97px;
    height: 1px;
    background-color: #999;
}

.slider-tick {
    position: absolute;
    left: 14px;
    top: -2px;
    width: 1px;
    height: 5px;
    background-color: #888;
}

.slider-knob {
    position: absolute;
    left: 42px;
    top: -4px;
    width: 9px;
    height: 9px;
    border-radius: 50%;
    background-color: #eee;
    border: 1px solid #888;
}
```
